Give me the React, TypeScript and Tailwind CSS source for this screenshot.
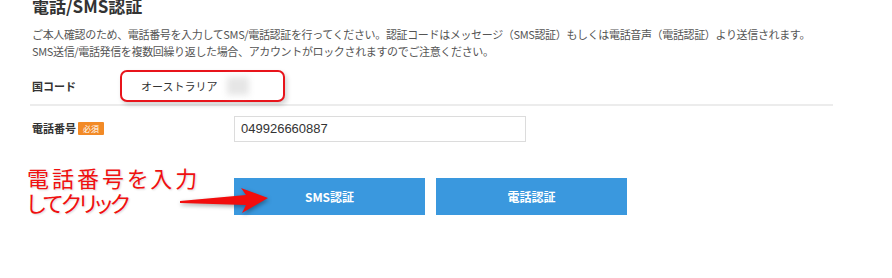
import React from "react";

const jp = "font-['Noto_Sans_CJK_JP','Noto_Sans',sans-serif]";

function Arrow() {
  return (
    <svg
      aria-hidden
      className="absolute left-[176px] top-[184px] drop-shadow-[1px_2px_2px_rgba(0,0,0,0.35)]"
      width="96"
      height="34"
      viewBox="0 0 96 34"
    >
      <polygon
        points="4,17 70,11 65,4 92,14 66,29 70,21 4,19"
        fill="#f20d0d"
      />
    </svg>
  );
}

export default function App() {
  return (
    <div className={`relative h-[278px] w-[892px] overflow-hidden bg-white ${jp}`}>
      <div className="pl-8">
        <h1 className="-mt-[4px] text-[17px] font-bold leading-[20px] text-[#333]">
          電話/SMS認証
        </h1>
        <p className="mt-[10px] text-[11px] leading-[17px] tracking-[-0.35px] text-[#555]">
          ご本人確認のため、電話番号を入力してSMS/電話認証を行ってください。認証コードはメッセージ（SMS認証）もしくは電話音声（電話認証）より送信されます。
          <br />
          SMS送信/電話発信を複数回繰り返した場合、アカウントがロックされますのでご注意ください。
        </p>

        {/* country */}
        <div className="-ml-[2px] mt-[10px] flex h-[36px] w-[803px] items-center border-b-2 border-[#ececec] pb-[2px] pl-[2px]">
          <span className="w-[88px] text-[11px] font-bold text-[#333]">国コード</span>
          <div className="flex h-[32px] w-[165px] items-center rounded-[7px] border-2 border-[#e8141b] bg-white pl-[19px] shadow-[2px_3px_5px_rgba(0,0,0,0.18)]">
            <span className="text-[11px] text-[#333]">オーストラリア</span>
            <span className="ml-[10px] h-[18px] w-[22px] bg-[#e6e6e6] blur-[3px]" />
          </div>
        </div>

        {/* phone */}
        <div className="flex h-[45px] items-center">
          <div className="flex w-[202px] items-center">
            <span className="text-[11px] font-bold text-[#333]">電話番号</span>
            <span className="ml-[2px] flex h-[13px] w-[26px] items-center justify-center rounded-[1px] bg-[#f28a26] text-[8px] leading-none text-white">
              必須
            </span>
          </div>
          <div className="flex h-[26px] w-[292px] items-center border border-[#dcdcdc] px-[6px] font-['Liberation_Sans',sans-serif] text-[13px] text-[#333]">
            049926660887
          </div>
        </div>

        {/* actions */}
        <div className="mt-[14px] flex items-start">
          <div className="-ml-[5px] w-[207px] text-[22px] leading-[25px] text-[#f01010] [font-feature-settings:'palt'] [text-shadow:1px_1px_2px_rgba(0,0,0,0.15)]">
            <div className="tracking-[3px]">電話番号を入力</div>
            <div className="tracking-[-2px]">してクリック</div>
          </div>
          <div className="mt-[13px] flex gap-[11px]">
            <button className="h-[37px] w-[191px] bg-[#3a98de] text-[12px] font-bold text-white">
              SMS認証
            </button>
            <button className="h-[37px] w-[191px] bg-[#3a98de] text-[12px] font-bold text-white">
              電話認証
            </button>
          </div>
        </div>
      </div>
      <Arrow />
    </div>
  );
}
